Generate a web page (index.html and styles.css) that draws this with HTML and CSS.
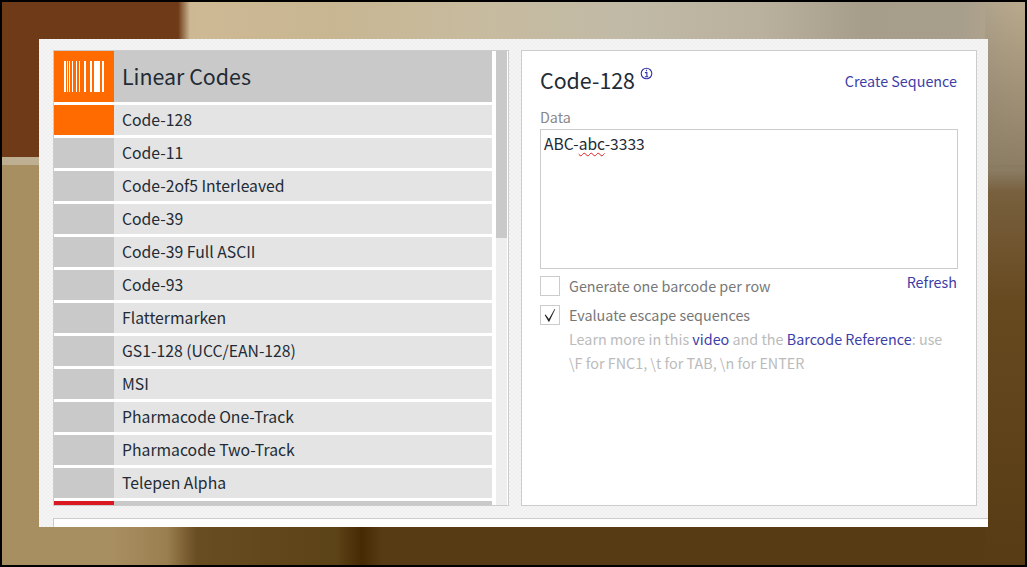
FILE: index.html
```html
<!DOCTYPE html>
<html lang="en">
<head>
<meta charset="utf-8">
<title>Barcode generator</title>
<link rel="stylesheet" href="styles.css">
</head>
<body>
<div class="frame">
  <main class="panel">
    <div class="panes">
      <section class="pane list-pane">
        <div class="list">
          <div class="row head">
            <div class="swatch orange">
              <svg class="bars" viewBox="0 0 40 31" width="40" height="31">
                <rect x="0" width="2" height="31"/><rect x="3" width="1" height="31"/><rect x="5" width="1" height="31"/><rect x="8" width="1" height="31"/><rect x="12" width="1" height="31"/><rect x="15" width="1" height="31"/><rect x="20" width="2" height="31"/><rect x="26" width="2" height="31"/><rect x="30" width="6" height="31"/><rect x="38" width="2" height="31"/>
              </svg>
            </div>
            <div class="label">Linear Codes</div>
          </div>
          <div class="row"><div class="swatch orange"></div><div class="label">Code-128</div></div>
          <div class="row"><div class="swatch"></div><div class="label">Code-11</div></div>
          <div class="row"><div class="swatch"></div><div class="label">Code-2of5 Interleaved</div></div>
          <div class="row"><div class="swatch"></div><div class="label">Code-39</div></div>
          <div class="row"><div class="swatch"></div><div class="label">Code-39 Full ASCII</div></div>
          <div class="row"><div class="swatch"></div><div class="label">Code-93</div></div>
          <div class="row"><div class="swatch"></div><div class="label">Flattermarken</div></div>
          <div class="row"><div class="swatch"></div><div class="label">GS1-128 (UCC/EAN-128)</div></div>
          <div class="row"><div class="swatch"></div><div class="label">MSI</div></div>
          <div class="row"><div class="swatch"></div><div class="label">Pharmacode One-Track</div></div>
          <div class="row"><div class="swatch"></div><div class="label">Pharmacode Two-Track</div></div>
          <div class="row"><div class="swatch"></div><div class="label">Telepen Alpha</div></div>
          <div class="row head"><div class="swatch red"></div><div class="label"></div></div>
        </div>
        <div class="scrollbar"><div class="thumb"></div></div>
      </section>
      <section class="pane form-pane">
        <div class="title-row">
          <h1 class="title">Code-128
            <svg class="info" viewBox="0 0 13 13" width="13" height="13">
              <circle cx="6.5" cy="6.5" r="5.3"/>
              <path d="M6.5 2.8V4.2M4.9 5.6H6.9V9.8M4.9 9.8H8.2"/>
            </svg>
          </h1>
          <a class="link">Create Sequence</a>
        </div>
        <div class="field-label">Data</div>
        <div class="data-box">ABC-<span class="typo">abc</span>-3333</div>
        <div class="option first">
          <span class="check"></span>
          <span class="option-label">Generate one barcode per row</span>
          <a class="link refresh">Refresh</a>
        </div>
        <div class="option">
          <span class="check">
            <svg class="tick" viewBox="0 0 18 18" width="18" height="18"><path d="M3.7 9 L4.6 8.5 L7.9 13 L13.6 3 L14.2 3.3 L8.2 15.8 L7.6 15.8 Z"/></svg>
          </span>
          <span class="option-label">Evaluate escape sequences</span>
        </div>
        <p class="help">Learn more in this <a class="link">video</a> and the <a class="link">Barcode Reference</a>: use<br>\F for FNC1, \t for TAB, \n for ENTER</p>
      </section>
    </div>
    <div class="result"></div>
  </main>
</div>
</body>
</html>
```

FILE: styles.css
```css
* { box-sizing: border-box; }
html, body { margin: 0; height: 100%; overflow: hidden; }
body {
  font-family: "Noto Sans CJK SC", "Source Sans Pro", "Open Sans", sans-serif;
  color: #333;
}
.frame {
  height: 567px;
  border: 2px solid #000;
  padding: 37px 37px 0;
  background:
    linear-gradient(to right, #6e3a18 0, #6e3a18 176px, rgba(110,58,24,0) 188px) no-repeat 0 0 / 100% 155px,
    linear-gradient(to bottom, rgba(122,96,64,0), #8b7c64 168px, #78603e 190px, #67491f 300px, #563b14 100%) no-repeat right top / 40px 100%,
    linear-gradient(to right, #bdae92 0, #cdb994 200px, #c8b692 330px, #c7bb9f 480px, #c1baa6 620px, #b9b19d 760px, #a79d8b 860px, #a89e8c 960px, #b8a98c 1015px) no-repeat 0 0 / 100% 163px,
    linear-gradient(to right, #a88f62 0, #a88f62 110px, #9a7f50 165px, #684c22 195px, #5c4217 335px, #452a04 360px, #563b14 380px, #563b14 100%) no-repeat 0 163px / 100% 404px;
}
.panel {
  width: 949px;
  height: 488px;
  overflow: hidden;
  padding: 11px 0 0 14px;
  background: repeating-conic-gradient(#f5f5f5 0 25%, #efefef 0 50%) 0 0 / 4px 4px;
}
.panes {
  display: flex;
  gap: 12px;
  padding-right: 11px;
}
.pane {
  width: 456px;
  height: 456px;
  border: 1px solid #ccc;
  background: #fff;
}
.list-pane { display: flex; }
.list {
  width: 438px;
  height: 454px;
  overflow: hidden;
  flex: none;
}
.row {
  display: flex;
  height: 30px;
  margin-bottom: 3px;
  background: #e4e4e4;
}
.row.head { height: 51px; background: #c9c9c9; }
.swatch {
  flex: none;
  width: 60px;
  background: #c9c9c9;
  display: flex;
  align-items: center;
  justify-content: center;
}
.swatch.orange { background: #ff6b00; }
.swatch.red { background: #d9191f; }
.bars { fill: #fff; display: block; }
.label {
  padding-left: 8px;
  font-size: 15.75px;
  line-height: 29px;
  color: #222b35;
}
.head .label { font-size: 21.4px; line-height: 50px; }
.scrollbar {
  flex: none;
  width: 11px;
  margin-left: 4px;
  background: #eee;
}
.thumb { height: 187px; background: #c9c9c9; }
.form-pane { padding: 0 18px; }
.title-row {
  display: flex;
  justify-content: space-between;
  height: 54px;
  padding-top: 14px;
}
.title {
  margin: -1px 0 0;
  font-size: 21.4px;
  line-height: 32px;
  font-weight: 400;
  color: #222a35;
}
.info {
  display: inline-block;
  vertical-align: 9px;
  fill: none;
  stroke: #3333aa;
  stroke-width: 1.1;
}
.link { color: #3d3da8; }
.title-row .link { font-size: 14.35px; line-height: 32px; margin-right: 1px; }
.field-label {
  font-size: 14.35px;
  line-height: 24px;
  color: #888;
}
.data-box {
  width: 418px;
  height: 140px;
  border: 1px solid #ccc;
  padding: 1px 3px;
  font-size: 15.6px;
  line-height: 24px;
  color: #222a35;
}
.typo { text-decoration: underline wavy #d92020 1px; text-underline-offset: 2px; }
.option {
  display: flex;
  align-items: center;
  height: 20px;
  margin-top: 9px;
  font-size: 14.35px;
  color: #777;
}
.option.first { margin-top: 7px; }
.option-label { padding-bottom: 2px; }
.check {
  flex: none;
  width: 20px;
  height: 20px;
  margin-right: 9px;
  border: 1px solid #ccc;
}
.tick { display: block; fill: #222; }
.refresh { margin-left: auto; margin-right: 1px; align-self: flex-start; line-height: 12px; }
.help {
  margin: 2px 0 0 29px;
  font-size: 14.35px;
  line-height: 24px;
  color: #bbb;
}
.result {
  height: 40px;
  margin-top: 12px;
  border-top: 1px solid #ccc;
  border-left: 1px solid #ccc;
  background: #fff;
}
```
